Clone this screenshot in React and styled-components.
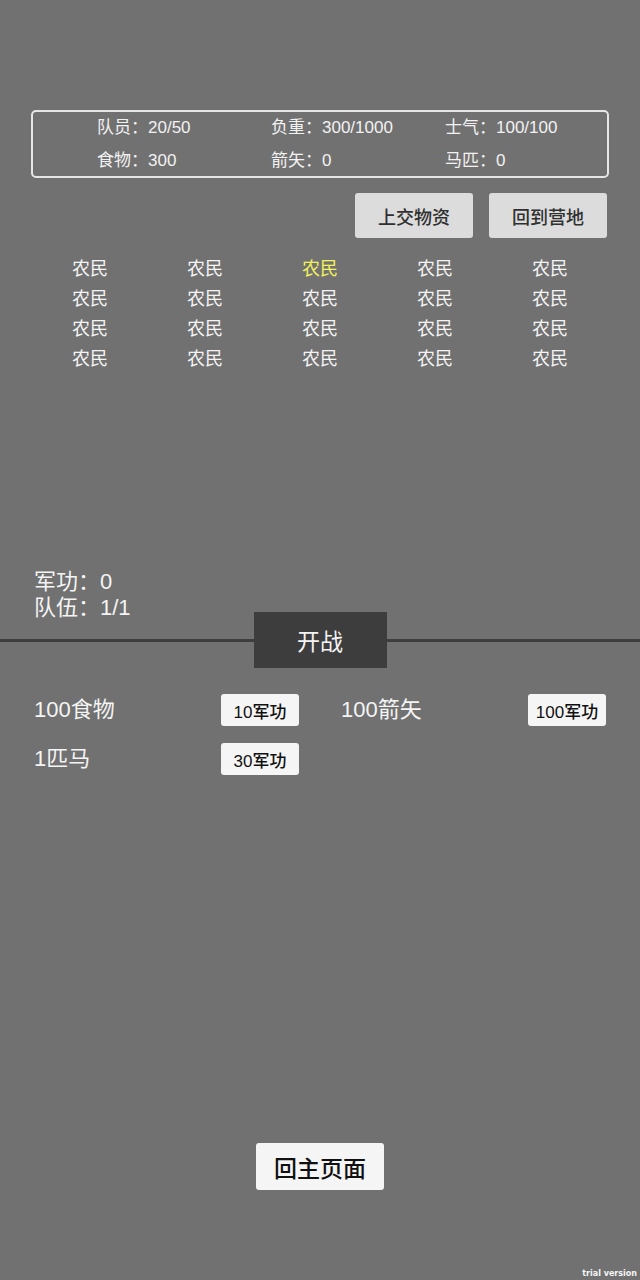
import React from "react";
import styled, { createGlobalStyle } from "styled-components";

const Global = createGlobalStyle`
  html, body { margin: 0; padding: 0; background: #717171; }
  body { font-family: "Liberation Sans", "Noto Sans CJK SC", sans-serif; }
`;

const Page = styled.div`
  position: relative;
  width: 640px;
  height: 1280px;
  padding-top: 110px;
  box-sizing: border-box;
  background: #717171;
  overflow: hidden;
`;

const StatsBox = styled.div`
  margin: 0 31px;
  height: 68px;
  box-sizing: border-box;
  border: 2px solid #e6e6e6;
  border-radius: 5px;
  display: grid;
  grid-template-columns: repeat(3, 174px);
  grid-template-rows: 31px 33px;
  padding-left: 64px;
`;

const Stat = styled.div`
  display: flex;
  align-items: ${(p) => (p.$second ? "flex-end" : "center")};
  color: #f2f2f2;
  font-size: 17px;
  line-height: 22px;
  white-space: nowrap;
  padding-bottom: ${(p) => (p.$second ? "4px" : "0")};
`;

const ActionRow = styled.div`
  display: flex;
  justify-content: flex-end;
  gap: 16px;
  margin-top: 15px;
  padding-right: 33px;
`;

const ActionButton = styled.button`
  width: 118px;
  height: 45px;
  border: none;
  border-radius: 3px;
  background: #dcdcdc;
  color: #303030;
  font-family: inherit;
  font-size: 18px;
  font-weight: 500;
  padding: 0;
`;

const CrewGrid = styled.div`
  width: 575px;
  margin: 16px auto 0;
  display: grid;
  grid-template-columns: repeat(5, 1fr);
  grid-auto-rows: 30px;
`;

const Crew = styled.div`
  text-align: center;
  line-height: 30px;
  font-size: 18px;
  color: ${(p) => (p.$active ? "#f2f25c" : "#f4f4f4")};
`;

const Info = styled.div`
  margin-top: 195px;
  padding-left: 34px;
  color: #f4f4f4;
  font-size: 22px;
  line-height: 26px;
`;

const BattleBar = styled.div`
  display: flex;
  align-items: center;
  margin-top: -9px;
  &::before, &::after {
    content: "";
    flex: 1;
    height: 3px;
    background: #3e3e3e;
  }
`;

const BattleButton = styled.button`
  width: 133px;
  height: 56px;
  border: none;
  background: #3d3d3d;
  color: #f4f4f4;
  font-family: inherit;
  font-size: 23px;
  padding: 0;
`;

const Shop = styled.div`
  margin-top: 26px;
  padding-left: 34px;
  display: grid;
  grid-template-columns: repeat(2, 307px);
  row-gap: 17px;
`;

const ShopItem = styled.div`
  display: flex;
  align-items: center;
  height: 32px;
`;

const ShopLabel = styled.span`
  width: 187px;
  color: #f4f4f4;
  font-size: 22px;
  line-height: 28px;
  margin-top: -1px;
  white-space: nowrap;
`;

const BuyButton = styled.button`
  width: 78px;
  height: 32px;
  border: none;
  border-radius: 3px;
  background: #f5f5f5;
  color: #111;
  font-family: inherit;
  font-size: 17px;
  font-weight: 500;
  padding: 0;
  white-space: nowrap;
`;

const HomeWrap = styled.div`
  display: flex;
  justify-content: center;
  margin-top: 368px;
`;

const HomeButton = styled.button`
  width: 128px;
  height: 47px;
  border: none;
  border-radius: 3px;
  background: #f5f5f5;
  color: #111;
  font-family: inherit;
  font-size: 23px;
  font-weight: 500;
  padding: 0;
`;

const Watermark = styled.div`
  position: absolute;
  right: 3px;
  bottom: 2px;
  font-family: "DejaVu Sans", sans-serif;
  font-size: 8px;
  font-weight: bold;
  color: #f4f4f4;
`;

const stats = [
  "队员：20/50",
  "负重：300/1000",
  "士气：100/100",
  "食物：300",
  "箭矢：0",
  "马匹：0",
];

const shop = [
  ["100食物", "10军功"],
  ["100箭矢", "100军功"],
  ["1匹马", "30军功"],
];

export default function App() {
  return (
    <Page>
      <Global />
      <StatsBox>
        {stats.map((s, i) => (
          <Stat key={s} $second={i >= 3}>
            {s}
          </Stat>
        ))}
      </StatsBox>
      <ActionRow>
        <ActionButton>上交物资</ActionButton>
        <ActionButton>回到营地</ActionButton>
      </ActionRow>
      <CrewGrid>
        {Array.from({ length: 20 }).map((_, i) => (
          <Crew key={i} $active={i === 2}>
            农民
          </Crew>
        ))}
      </CrewGrid>
      <Info>
        <div>军功：0</div>
        <div>队伍：1/1</div>
      </Info>
      <BattleBar>
        <BattleButton>开战</BattleButton>
      </BattleBar>
      <Shop>
        {shop.map(([label, cost]) => (
          <ShopItem key={label}>
            <ShopLabel>{label}</ShopLabel>
            <BuyButton>{cost}</BuyButton>
          </ShopItem>
        ))}
      </Shop>
      <HomeWrap>
        <HomeButton>回主页面</HomeButton>
      </HomeWrap>
      <Watermark>trial version</Watermark>
    </Page>
  );
}
